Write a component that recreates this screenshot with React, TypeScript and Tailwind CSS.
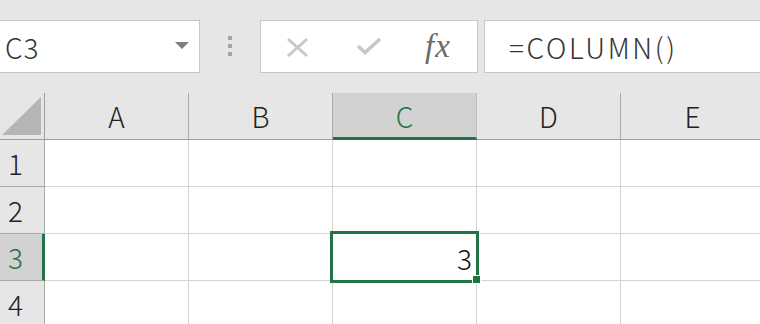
const columns = ["A", "B", "C", "D", "E"];
const rows = [1, 2, 3, 4];

function CornerTriangle() {
  return (
    <svg width="40" height="39" viewBox="0 0 40 39" className="absolute left-[2px] top-[4px]">
      <polygon points="39,0 39,38 0,38" fill="#b5b5b5" />
    </svg>
  );
}

function Toolbar() {
  return (
    <div className="flex h-[93px] items-start overflow-hidden bg-[#e6e6e6] pt-[20px]">
      <div className="flex h-[53px] w-[200px] shrink-0 items-center justify-between border-y border-r border-[#c6c6c6] bg-white pl-[5px] pr-[10px]">
        <span className="text-[28px] font-light leading-none tracking-[1px] text-[#333]">C3</span>
        <svg width="14" height="7" viewBox="0 0 14 7" className="-mt-[3px]">
          <polygon points="0,0 14,0 7,7" fill="#7f7f7f" />
        </svg>
      </div>

      <div className="ml-[28px] mt-[16px] flex shrink-0 flex-col gap-[4px]">
        <span className="h-[4px] w-[4px] bg-[#a6a6a6]" />
        <span className="h-[4px] w-[4px] bg-[#a6a6a6]" />
        <span className="h-[4px] w-[4px] bg-[#a6a6a6]" />
      </div>

      <div className="ml-[28px] flex h-[53px] w-[218px] shrink-0 items-center border border-[#c6c6c6] bg-white pl-[25px]">
        <svg width="23" height="21" viewBox="0 0 23 21" className="mt-[1px]">
          <path d="M2 2 L21 19 M21 2 L2 19" stroke="#c8c8c8" strokeWidth="3" fill="none" />
        </svg>
        <svg width="26" height="18" viewBox="0 0 26 18" className="ml-[47px] -mt-[2px]">
          <path d="M2 9 L9 15.5 L24 2" stroke="#c8c8c8" strokeWidth="3.6" fill="none" />
        </svg>
        <span className="ml-[43px] font-['Liberation_Serif',serif] text-[33px] italic leading-none tracking-[1px] text-[#6b6b6b]">
          fx
        </span>
      </div>

      <div className="ml-[6px] flex h-[53px] w-[320px] shrink-0 items-center border-y border-l border-[#c6c6c6] bg-white pl-[24px]">
        <span className="text-[28px] font-light leading-none tracking-[2.6px] text-[#333]">=COLUMN()</span>
      </div>
    </div>
  );
}

function Grid() {
  return (
    <div className="grid grid-cols-[45px_repeat(5,144px)] grid-rows-[47px_repeat(4,47px)]">
      <div className="relative border-r border-b border-[#9e9e9e] bg-[#e6e6e6]">
        <CornerTriangle />
      </div>
      {columns.map((col) =>
        col === "C" ? (
          <div
            key={col}
            className="flex items-center justify-center border-r border-r-[#bdbdbd] border-b-[3px] border-b-[#217346] bg-[#d2d2d2] pt-[2px] text-[28px] font-light text-[#217346]"
          >
            {col}
          </div>
        ) : (
          <div
            key={col}
            className="flex items-center justify-center border-r border-b border-r-[#ababab] border-b-[#9e9e9e] bg-[#e6e6e6] text-[28px] font-light text-[#222]"
          >
            {col}
          </div>
        )
      )}

      {rows.map((row) => (
        <RowCells key={row} row={row} />
      ))}
    </div>
  );
}

function RowCells({ row }: { row: number }) {
  const selected = row === 3;
  return (
    <>
      <div
        className={
          selected
            ? "flex items-center border-r-[3px] border-b border-r-[#217346] border-b-[#ababab] bg-[#d2d2d2] pl-[8px] text-[28px] font-light text-[#217346]"
            : "flex items-center border-r border-b border-[#ababab] bg-[#e6e6e6] pl-[8px] text-[28px] font-light text-[#222]"
        }
      >
        {row}
      </div>
      {columns.map((col) => {
        const active = selected && col === "C";
        return (
          <div
            key={col}
            className="relative flex items-center justify-end border-r border-b border-[#d4d4d4] bg-white pr-[4px] text-[28px] font-light text-[#111]"
          >
            {active && (
              <>
                <span className="mt-[2px]">3</span>
                <div className="absolute -left-[3px] -top-[3px] z-10 h-[52px] w-[149px] border-[3px] border-[#217346]">
                  <div className="absolute left-[139px] top-[41px] h-[9px] w-[9px] border border-white bg-[#217346]" />
                </div>
              </>
            )}
          </div>
        );
      })}
    </>
  );
}

export default function App() {
  return (
    <div className="h-[324px] w-[760px] overflow-hidden bg-white font-['Noto_Sans_CJK_JP','Noto_Sans',sans-serif]">
      <Toolbar />
      <Grid />
    </div>
  );
}
